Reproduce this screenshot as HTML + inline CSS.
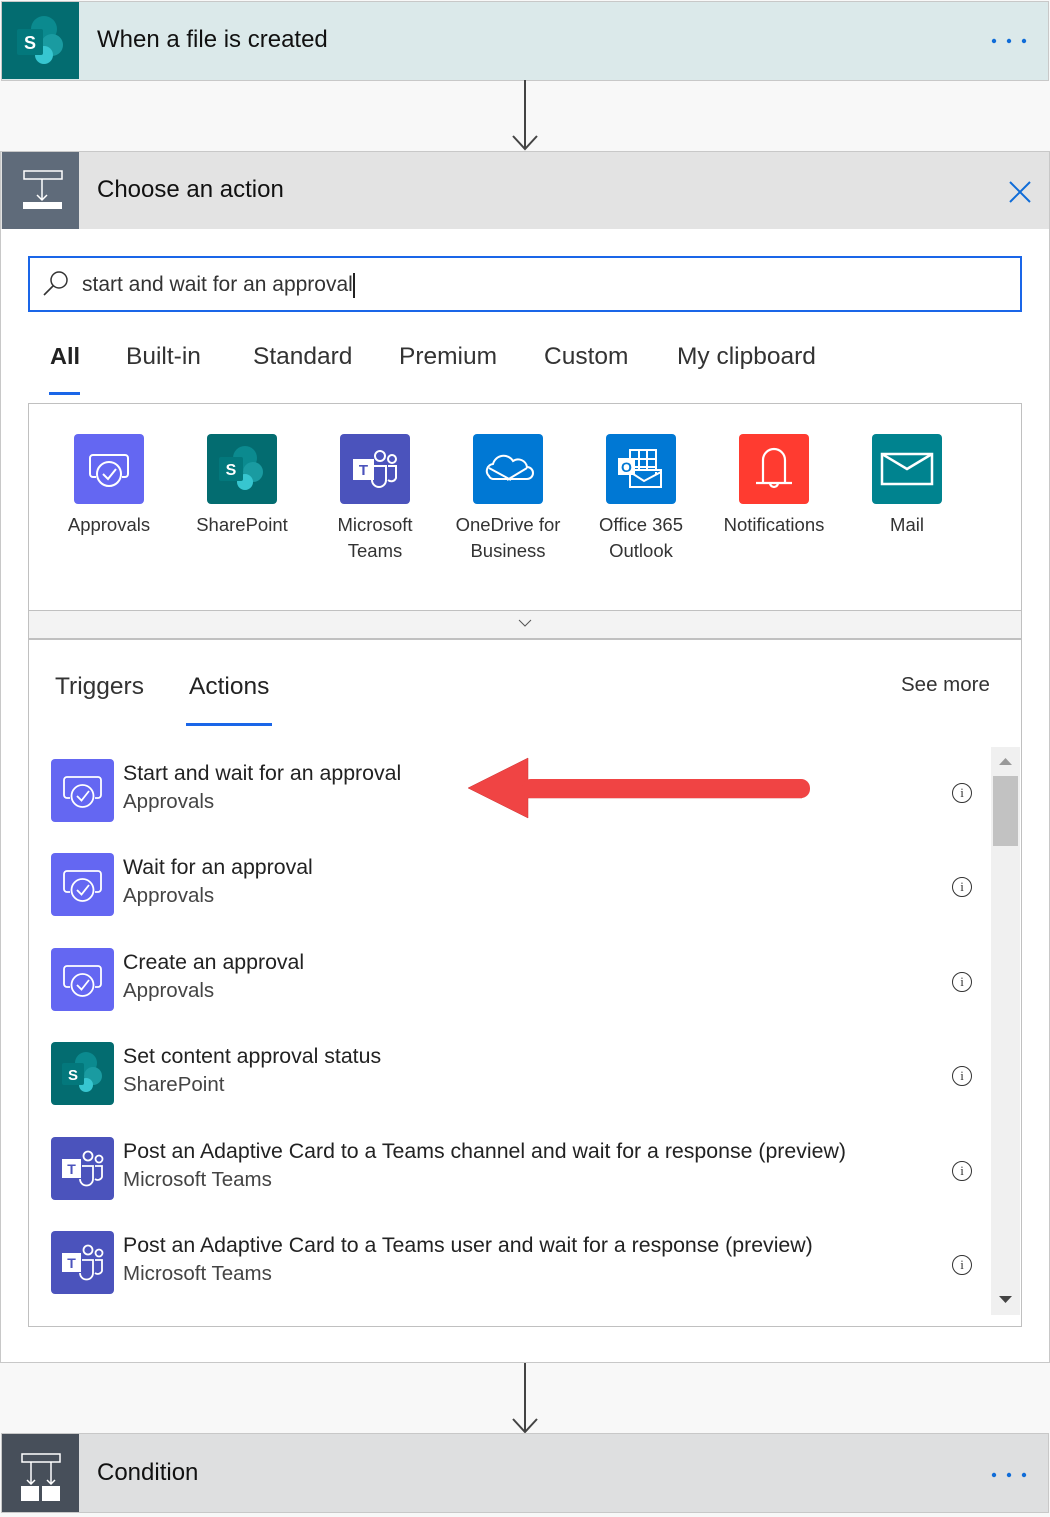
<!DOCTYPE html>
<html><head><meta charset="utf-8"><style>
*{margin:0;padding:0;box-sizing:border-box}
body{width:1050px;height:1515px;background:#f8f8f8;font-family:"Liberation Sans",sans-serif;color:#222;position:relative;overflow:hidden}
.a{position:absolute}
.t{position:absolute;white-space:nowrap}
.ico{position:absolute;width:70px;height:70px;border-radius:4px}
.lbl{position:absolute;width:160px;text-align:center;font-size:18.5px;line-height:26px;color:#333}
.li{position:absolute;left:51px;width:63px;height:63px;border-radius:4px}
.lt{position:absolute;left:123px;font-size:21.3px;color:#222;white-space:nowrap}
.ls{position:absolute;left:123px;font-size:20.5px;color:#444;white-space:nowrap}
.info{position:absolute;left:952px;width:20px;height:20px;border:1.5px solid #333;border-radius:50%;font-size:13px;text-align:center;line-height:17px;color:#333;font-family:"Liberation Serif",serif}
.tab{position:absolute;top:343px;font-size:24.5px;color:#333;white-space:nowrap}
</style></head><body>

<!-- top card -->
<div class="a" style="left:1px;top:1px;width:1048px;height:80px;border:1px solid #c8c8c8;background:#dbe9ea"></div>
<div class="a" style="left:2px;top:2px;width:77px;height:77px;background:#036c70">
<svg width="77" height="77" viewBox="0 0 77 77"><circle cx="42" cy="27" r="13" fill="#0b8a8f"/><circle cx="50" cy="43" r="11" fill="#1a9ba1"/><circle cx="42" cy="53" r="9" fill="#37c6d0"/><rect x="15" y="27" width="26" height="26" rx="2" fill="#03787c"/><text x="28" y="47" font-size="18" font-weight="bold" fill="#fff" text-anchor="middle" font-family="Liberation Sans">S</text></svg></div>
<div class="t" style="left:97px;top:26px;font-size:24px;color:#111">When a file is created</div>
<svg class="a" style="left:990px;top:37px" width="40" height="8"><circle cx="4" cy="4" r="2.2" fill="#0f6cd8"/><circle cx="19" cy="4" r="2.2" fill="#0f6cd8"/><circle cx="34" cy="4" r="2.2" fill="#0f6cd8"/></svg>

<!-- arrow 1 -->
<svg class="a" style="left:505px;top:80px" width="40" height="72"><line x1="20" y1="0" x2="20" y2="68" stroke="#444" stroke-width="2"/><polyline points="8,56 20,69 32,56" fill="none" stroke="#444" stroke-width="2"/></svg>

<!-- main card -->
<div class="a" style="left:0;top:151px;width:1050px;height:1212px;border:1px solid #c8c8c8;background:#fff"></div>
<div class="a" style="left:1px;top:152px;width:1048px;height:77px;background:#e3e3e3"></div>
<div class="a" style="left:2px;top:152px;width:77px;height:77px;background:#5f6b7a">
<svg width="77" height="77"><rect x="22" y="19" width="38" height="8" fill="none" stroke="#fff" stroke-width="1.5"/><line x1="40" y1="27" x2="40" y2="48" stroke="#fff" stroke-width="1.5"/><polyline points="35,43 40,48 45,43" fill="none" stroke="#fff" stroke-width="1.5"/><rect x="21" y="50" width="39" height="7" fill="#fff"/></svg></div>
<div class="t" style="left:97px;top:176px;font-size:24px;color:#111">Choose an action</div>
<svg class="a" style="left:1008px;top:180px" width="24" height="24"><path d="M2 2L22 22M22 2L2 22" stroke="#0f6cd8" stroke-width="2"/></svg>

<!-- search -->
<div class="a" style="left:28px;top:256px;width:994px;height:56px;border:2.5px solid #1a66e8"></div>
<svg class="a" style="left:42px;top:270px" width="30" height="28"><circle cx="17" cy="10" r="8" fill="none" stroke="#333" stroke-width="1.5"/><line x1="11" y1="16" x2="2" y2="25" stroke="#333" stroke-width="1.6"/></svg>
<div class="t" style="left:82px;top:273px;font-size:21px;color:#333">start and wait for an approval</div>
<div class="a" style="left:353px;top:273px;width:1.5px;height:25px;background:#222"></div>

<!-- tabs -->
<div class="tab" style="left:50px;font-weight:bold;color:#222;font-size:23.5px">All</div>
<div class="a" style="left:49px;top:392px;width:31px;height:3px;background:#1a66e8"></div>
<div class="tab" style="left:126px">Built-in</div>
<div class="tab" style="left:253px">Standard</div>
<div class="tab" style="left:399px">Premium</div>
<div class="tab" style="left:544px">Custom</div>
<div class="tab" style="left:677px">My clipboard</div>

<!-- connectors box -->
<div class="a" style="left:28px;top:403px;width:994px;height:237px;border:1px solid #c0c0c0"></div>
<div class="a" style="left:29px;top:610px;width:992px;height:29px;background:#f3f3f3;border-top:1px solid #c0c0c0;border-bottom:1px solid #c0c0c0"></div>
<svg class="a" style="left:518px;top:618px" width="14" height="10"><polyline points="1,2 7,8 13,2" fill="none" stroke="#555" stroke-width="1"/></svg>

<div class="ico" style="left:74px;top:434px;background:#6467f2"><svg width="70" height="70"><path d="M16 40V24a3 3 0 0 1 3-3h32a3 3 0 0 1 3 3v16a3 3 0 0 1-3 3h-3M22 43h-3a3 3 0 0 1-3-3" fill="none" stroke="#fff" stroke-width="2"/><circle cx="35" cy="40" r="12" fill="none" stroke="#fff" stroke-width="2"/><polyline points="29,40 34,45 42,35" fill="none" stroke="#fff" stroke-width="2"/></svg></div>
<div class="lbl" style="left:29px;top:512px">Approvals</div>
<div class="ico" style="left:207px;top:434px;background:#036c70"><svg width="70" height="70"><circle cx="38" cy="24" r="12" fill="#0b8a8f"/><circle cx="46" cy="38" r="10" fill="#1a9ba1"/><circle cx="38" cy="48" r="8" fill="#37c6d0"/><rect x="12" y="23" width="24" height="24" rx="2" fill="#03787c"/><text x="24" y="41" font-size="16" font-weight="bold" fill="#fff" text-anchor="middle">S</text></svg></div>
<div class="lbl" style="left:162px;top:512px">SharePoint</div>
<div class="ico" style="left:340px;top:434px;background:#4b53bc"><svg width="70" height="70"><circle cx="40" cy="22" r="5" fill="none" stroke="#fff" stroke-width="2"/><circle cx="52" cy="25" r="4" fill="none" stroke="#fff" stroke-width="2"/><path d="M34 32h12v14a7 7 0 0 1-14 0M48 32h8v12a5 5 0 0 1-8 2" fill="none" stroke="#fff" stroke-width="2"/><rect x="13" y="25" width="21" height="21" fill="#fff"/><text x="23.5" y="41" font-size="15" font-weight="bold" fill="#4b53bc" text-anchor="middle">T</text></svg></div>
<div class="lbl" style="left:295px;top:512px">Microsoft<br>Teams</div>
<div class="ico" style="left:473px;top:434px;background:#0078d4"><svg width="70" height="70"><path d="M16 42a7 7 0 0 1 4-12 11 11 0 0 1 20-3 9 9 0 0 1 14 6 6 6 0 0 1 0 12H20a5 5 0 0 1-4-3z M16 34l22 12M54 34l-20 12" fill="none" stroke="#fff" stroke-width="2"/></svg></div>
<div class="lbl" style="left:428px;top:512px">OneDrive for<br>Business</div>
<div class="ico" style="left:606px;top:434px;background:#0078d4"><svg width="70" height="70"><rect x="24" y="16" width="26" height="36" fill="none" stroke="#fff" stroke-width="2"/><path d="M33 16v20M41 16v20M24 25h26M24 33h26" stroke="#fff" stroke-width="2"/><path d="M24 36h31v17H24zM24 38l14 9 17-9" fill="#0078d4" stroke="#fff" stroke-width="2"/><rect x="12" y="24" width="17" height="17" fill="#fff"/><text x="20.5" y="38" font-size="14" font-weight="bold" fill="#0078d4" text-anchor="middle">O</text></svg></div>
<div class="lbl" style="left:561px;top:512px">Office 365<br>Outlook</div>
<div class="ico" style="left:739px;top:434px;background:#ff3b30"><svg width="70" height="70"><path d="M24 49V26a11 11 0 0 1 22 0v23M17 49h36M31 49a4 4 0 0 0 8 0" fill="none" stroke="#fff" stroke-width="2.2"/></svg></div>
<div class="lbl" style="left:694px;top:512px">Notifications</div>
<div class="ico" style="left:872px;top:434px;background:#00838f"><svg width="70" height="70"><rect x="10" y="20" width="50" height="30" fill="none" stroke="#fff" stroke-width="2.5"/><polyline points="10,20 35,35 60,20" fill="none" stroke="#fff" stroke-width="2.5"/></svg></div>
<div class="lbl" style="left:827px;top:512px">Mail</div>

<!-- actions panel -->
<div class="a" style="left:28px;top:639px;width:994px;height:688px;border:1px solid #c0c0c0;border-top:none"></div>
<div class="t" style="left:55px;top:673px;font-size:24.5px;color:#333">Triggers</div>
<div class="t" style="left:189px;top:673px;font-size:24.5px;color:#222">Actions</div>
<div class="a" style="left:186px;top:723px;width:86px;height:3px;background:#1a66e8"></div>
<div class="t" style="left:901px;top:673px;font-size:20.5px;color:#333">See more</div>

<!-- scrollbar -->
<div class="a" style="left:991px;top:747px;width:29px;height:568px;background:#f0f0f0"></div>
<div class="a" style="left:993px;top:776px;width:25px;height:70px;background:#c2c2c2"></div>
<svg class="a" style="left:998px;top:757px" width="15" height="10"><polygon points="7.5,1 14,8 1,8" fill="#999"/></svg>
<svg class="a" style="left:998px;top:1295px" width="15" height="10"><polygon points="1,1 14,1 7.5,8" fill="#444"/></svg>

<!-- list items -->
<svg width="0" height="0" style="position:absolute"><defs>
<g id="appr"><path d="M13 36V21a3 3 0 0 1 3-3h31a3 3 0 0 1 3 3v15a3 3 0 0 1-3 3h-3M19 39h-3a3 3 0 0 1-3-3" fill="none" stroke="#fff" stroke-width="1.8"/><circle cx="31.5" cy="37" r="11" fill="none" stroke="#fff" stroke-width="1.8"/><polyline points="26,37 30.5,41.5 38,32" fill="none" stroke="#fff" stroke-width="1.8"/></g>
<g id="team"><circle cx="37" cy="19" r="4.5" fill="none" stroke="#fff" stroke-width="1.8"/><circle cx="48" cy="22" r="3.5" fill="none" stroke="#fff" stroke-width="1.8"/><path d="M31 29h11v13a6.5 6.5 0 0 1-13 0M44 29h7v11a4.5 4.5 0 0 1-7 2" fill="none" stroke="#fff" stroke-width="1.8"/><rect x="11" y="22" width="19" height="19" fill="#fff"/><text x="20.5" y="37" font-size="14" font-weight="bold" fill="#4b53bc" text-anchor="middle" font-family="Liberation Sans">T</text></g>
</defs></svg>

<div class="li" style="top:759px;background:#6467f2"><svg width="63" height="63"><use href="#appr"/></svg></div>
<div class="lt" style="top:761px">Start and wait for an approval</div>
<div class="ls" style="top:790px">Approvals</div>
<div class="info" style="top:783px">i</div>

<div class="li" style="top:853px;background:#6467f2"><svg width="63" height="63"><use href="#appr"/></svg></div>
<div class="lt" style="top:855px">Wait for an approval</div>
<div class="ls" style="top:884px">Approvals</div>
<div class="info" style="top:877px">i</div>

<div class="li" style="top:948px;background:#6467f2"><svg width="63" height="63"><use href="#appr"/></svg></div>
<div class="lt" style="top:950px">Create an approval</div>
<div class="ls" style="top:979px">Approvals</div>
<div class="info" style="top:972px">i</div>

<div class="li" style="top:1042px;background:#036c70"><svg width="63" height="63"><circle cx="35" cy="21" r="11" fill="#0b8a8f"/><circle cx="42" cy="34" r="9" fill="#1a9ba1"/><circle cx="35" cy="43" r="7" fill="#37c6d0"/><rect x="11" y="21" width="22" height="22" rx="2" fill="#03787c"/><text x="22" y="38" font-size="15" font-weight="bold" fill="#fff" text-anchor="middle">S</text></svg></div>
<div class="lt" style="top:1044px">Set content approval status</div>
<div class="ls" style="top:1073px">SharePoint</div>
<div class="info" style="top:1066px">i</div>

<div class="li" style="top:1137px;background:#4b53bc"><svg width="63" height="63"><use href="#team"/></svg></div>
<div class="lt" style="top:1139px">Post an Adaptive Card to a Teams channel and wait for a response (preview)</div>
<div class="ls" style="top:1168px">Microsoft Teams</div>
<div class="info" style="top:1161px">i</div>

<div class="li" style="top:1231px;background:#4b53bc"><svg width="63" height="63"><use href="#team"/></svg></div>
<div class="lt" style="top:1233px">Post an Adaptive Card to a Teams user and wait for a response (preview)</div>
<div class="ls" style="top:1262px">Microsoft Teams</div>
<div class="info" style="top:1255px">i</div>

<!-- red arrow -->
<svg class="a" style="left:462px;top:752px" width="352" height="72"><polygon points="6,36 66,6 66,28 340,28 346,36 340,46 66,46 66,66" fill="#f04444" stroke="#c33" stroke-width="0.5"/><rect x="60" y="27" width="288" height="19" rx="9" fill="#f04444"/></svg>

<!-- arrow 2 -->
<svg class="a" style="left:505px;top:1363px" width="40" height="72"><line x1="20" y1="0" x2="20" y2="68" stroke="#444" stroke-width="2"/><polyline points="8,56 20,69 32,56" fill="none" stroke="#444" stroke-width="2"/></svg>

<!-- condition -->
<div class="a" style="left:1px;top:1433px;width:1048px;height:80px;border:1px solid #c8c8c8;background:#dedfe0"></div>
<div class="a" style="left:2px;top:1434px;width:77px;height:78px;background:#474f5a">
<svg width="77" height="78"><rect x="20" y="20" width="38" height="8" fill="none" stroke="#fff" stroke-width="1.5"/><line x1="29" y1="28" x2="29" y2="50" stroke="#fff" stroke-width="1.5"/><line x1="49" y1="28" x2="49" y2="50" stroke="#fff" stroke-width="1.5"/><polyline points="25,46 29,50 33,46" fill="none" stroke="#fff" stroke-width="1.5"/><polyline points="45,46 49,50 53,46" fill="none" stroke="#fff" stroke-width="1.5"/><rect x="19" y="52" width="18" height="15" fill="#fff"/><rect x="40" y="52" width="18" height="15" fill="#fff"/></svg></div>
<div class="t" style="left:97px;top:1459px;font-size:24px;color:#111">Condition</div>
<svg class="a" style="left:990px;top:1471px" width="40" height="8"><circle cx="4" cy="4" r="2.2" fill="#0f6cd8"/><circle cx="19" cy="4" r="2.2" fill="#0f6cd8"/><circle cx="34" cy="4" r="2.2" fill="#0f6cd8"/></svg>
</body></html>
